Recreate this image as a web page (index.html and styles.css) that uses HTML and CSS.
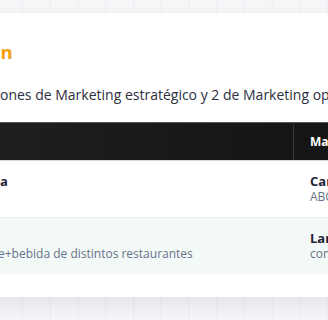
FILE: index.html
```html
<!DOCTYPE html>
<html lang="es">
<head>
<meta charset="utf-8">
<title>Plan de acción</title>
<link rel="stylesheet" href="styles.css">
</head>
<body>
<main class="page">
  <section class="card">
    <h2 class="title"><span class="cut"><span>Plan de acci</span></span>ón</h2>
    <p class="intro"><span class="cut"><span>Esta sección recoge las 3 acci</span></span>ones de Marketing estratégico y 2 de Marketing operativo</p>
    <table class="actions">
      <thead>
        <tr>
          <th class="c1"><span class="cut"><span>Acción</span></span></th>
          <th class="c2">Marca</th>
        </tr>
      </thead>
      <tbody>
        <tr>
          <td class="c1">
            <span class="name"><span class="cut"><span>Promoción cruzad</span></span>a</span>
            <span class="desc"><span class="cut"><span>Cupones</span></span></span>
          </td>
          <td class="c2">
            <span class="name">Carrefour</span>
            <span class="desc">ABC Supermercados</span>
          </td>
        </tr>
        <tr class="alt">
          <td class="c1">
            <span class="name"><span class="cut"><span>Menú</span></span></span>
            <span class="desc"><span class="cut"><span>Descuentos en combos de plato+postr</span></span>e+bebida de distintos restaurantes</span>
          </td>
          <td class="c2">
            <span class="name">Lanzamiento</span>
            <span class="desc">con influencers</span>
          </td>
        </tr>
      </tbody>
    </table>
  </section>
</main>
</body>
</html>
```

FILE: styles.css
```css
html, body {
  margin: 0;
  padding: 0;
  overflow: hidden;
}

body {
  width: 328px;
  height: 320px;
  background-color: #f6f7f9;
  background-image: linear-gradient(90deg, rgba(20, 30, 60, 0.04) 1px, transparent 1px);
  background-size: 27.75px 27.75px;
  background-position: 22px 0;
  font-family: "Open Sans", "Liberation Sans", sans-serif;
  color: #2b2f3e;
}

.page {
  padding-top: 13px;
}

.card {
  width: 760px;
  margin-left: -40px;
  padding: 24px 24px 23px;
  background: #ffffff;
  border-radius: 12px;
  box-shadow: 0 8px 22px rgba(15, 23, 42, 0.09);
}

.cut {
  display: inline-flex;
  justify-content: flex-end;
  width: 0;
  white-space: nowrap;
}

.cut > span {
  flex: none;
}

.title {
  margin: 1px 0 0 5px;
  font-size: 18.5px;
  line-height: 28px;
  font-weight: 700;
  color: #f59e0b;
  white-space: nowrap;
}

.intro {
  margin: 19px 0 0 16px;
  font-size: 14px;
  line-height: 20px;
  white-space: nowrap;
  color: #2b2f3e;
}

.actions {
  margin-top: 17px;
  border-collapse: collapse;
  table-layout: fixed;
  width: 760px;
  white-space: nowrap;
}

.actions th {
  padding: 11px 16px 10px;
  font-size: 12px;
  line-height: 16px;
  font-weight: 700;
  color: #ffffff;
  text-align: left;
  border-top: 1px solid #5a5a5a;
  border-bottom: 1px solid #d6d8da;
}

.actions thead tr {
  background: linear-gradient(90deg, #1f1f1f 0%, #151515 40%, #1c1c1c 100%);
}

.actions th.c1 {
  width: 277px;
  border-right: 1px solid #383838;
}

.actions td {
  padding: 12px 16px;
  vertical-align: top;
  border-bottom: 1px solid #eef1f0;
}

.actions td.c1 {
  border-right: 1px solid transparent;
}

.actions tr.alt td {
  background: #f3f9f6;
  border-bottom: none;
}

.name {
  display: block;
  font-size: 13px;
  line-height: 16px;
  font-weight: 700;
  color: #1e2337;
}

.desc {
  display: block;
  font-size: 12px;
  line-height: 16px;
  color: #66728a;
}

.alt .c1 .desc {
  margin-left: -2px;
}
```
